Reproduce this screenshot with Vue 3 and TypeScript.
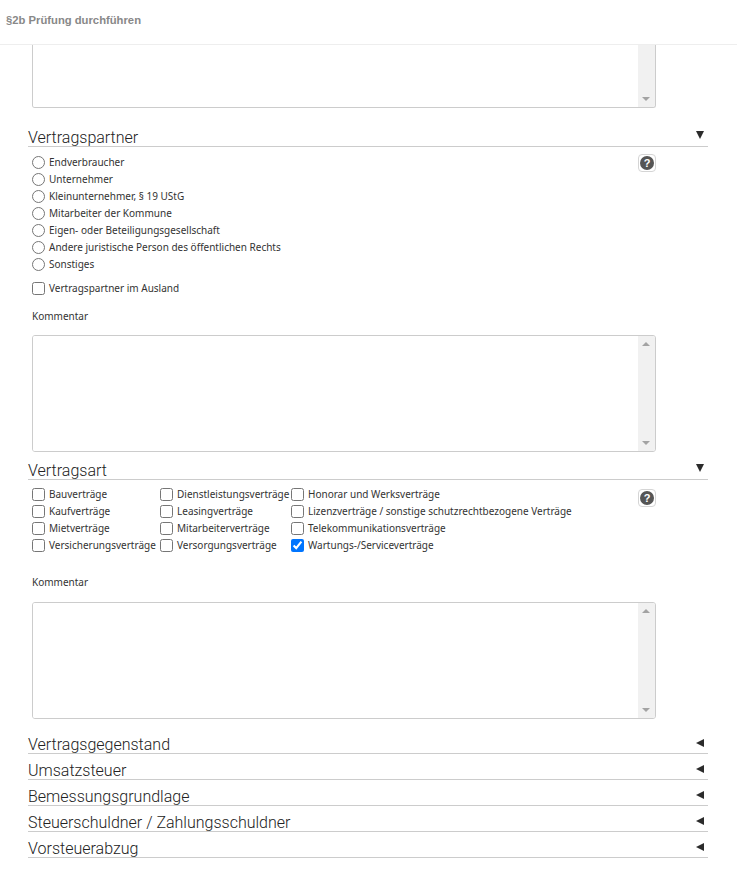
<script setup lang="ts">
const partners = [
  'Endverbraucher', 'Unternehmer', 'Kleinunternehmer, § 19 UStG', 'Mitarbeiter der Kommune',
  'Eigen- oder Beteiligungsgesellschaft', 'Andere juristische Person des öffentlichen Rechts', 'Sonstiges',
]
const kinds = [
  ['Bauverträge', 'Kaufverträge', 'Mietverträge', 'Versicherungsverträge'],
  ['Dienstleistungsverträge', 'Leasingverträge', 'Mitarbeiterverträge', 'Versorgungsverträge'],
  ['Honorar und Werksverträge', 'Lizenzverträge / sonstige schutzrechtbezogene Verträge', 'Telekommunikationsverträge', 'Wartungs-/Serviceverträge'],
]
const collapsed = ['Vertragsgegenstand', 'Umsatzsteuer', 'Bemessungsgrundlage', 'Steuerschuldner / Zahlungsschuldner', 'Vorsteuerabzug']
</script>

<template>
  <div class="page">
    <header class="top">§2b Prüfung durchführen</header>
    <main class="content">
      <div class="area area-clipped">
        <textarea></textarea>
        <div class="bar"><span class="up"></span><span class="down"></span></div>
      </div>

      <section class="sec first">
        <div class="head"><h2>Vertragspartner</h2><span class="tri-down"></span></div>
        <div class="options">
          <div class="radios">
            <label v-for="p in partners" :key="p" class="opt">
              <input type="radio" name="partner" /><span>{{ p }}</span>
            </label>
          </div>
          <button class="help" type="button"><span>?</span></button>
        </div>
        <label class="opt abroad"><input type="checkbox" /><span>Vertragspartner im Ausland</span></label>
        <div class="comment c1">Kommentar</div>
        <div class="area">
          <textarea></textarea>
          <div class="bar"><span class="up"></span><span class="down"></span></div>
        </div>
      </section>

      <section class="sec second">
        <div class="head"><h2>Vertragsart</h2><span class="tri-down"></span></div>
        <div class="options kinds">
          <div class="grid">
            <div v-for="(col, i) in kinds" :key="i" class="col">
              <label v-for="k in col" :key="k" class="opt">
                <input type="checkbox" :checked="k.startsWith('Wartungs')" /><span>{{ k }}</span>
              </label>
            </div>
          </div>
          <button class="help" type="button"><span>?</span></button>
        </div>
        <div class="comment c2">Kommentar</div>
        <div class="area">
          <textarea></textarea>
          <div class="bar"><span class="up"></span><span class="down"></span></div>
        </div>
      </section>

      <div class="closed">
        <div v-for="c in collapsed" :key="c" class="head shut"><h2>{{ c }}</h2><span class="tri-left"></span></div>
      </div>
    </main>
  </div>
</template>

<style>
html, body { margin: 0; background: #fff; }
</style>

<style scoped>
.page {
  width: 737px;
  height: 876px;
  overflow: hidden;
  font-family: "Noto Sans", sans-serif;
  font-size: 10px;
  color: #333;
  background: #fff;
}
.top {
  box-sizing: border-box;
  height: 45px;
  padding: 13px 0 0 6px;
  border-bottom: 1px solid #eee;
  font: bold 11.25px/14px "Liberation Sans", sans-serif;
  color: #888;
}
.content { padding: 0 29px 0 28px; }
.area {
  box-sizing: border-box;
  display: flex;
  width: 624px;
  height: 117px;
  margin-left: 4px;
  border: 1px solid #ccc;
  border-radius: 3px;
  overflow: hidden;
}
.area-clipped { height: 63px; border-top: 0; border-radius: 0 0 3px 3px; }
.area textarea {
  flex: 1;
  min-width: 0;
  border: 0;
  outline: 0;
  padding: 0;
  resize: none;
  background: #fff;
}
.bar {
  position: relative;
  width: 17px;
  flex: none;
  background: #f1f1f1;
}
.up, .down {
  position: absolute;
  left: 4px;
  width: 0;
  height: 0;
  border-left: 4px solid transparent;
  border-right: 4px solid transparent;
}
.up { top: 6px; border-bottom: 4px solid #a3a3a3; }
.down { bottom: 6px; border-top: 4px solid #a3a3a3; }
.area-clipped .up { display: none; }
.sec.first { margin-top: 18px; }
.sec.second { margin-top: 7px; }
.head {
  box-sizing: border-box;
  display: flex;
  justify-content: space-between;
  height: 21px;
  border-bottom: 1px solid #ccc;
}
.head h2 {
  margin: 0;
  font: 300 16px/23px Roboto, sans-serif;
  color: #222;
}
.tri-down {
  width: 0;
  height: 0;
  margin: 5px 4px 0 0;
  border-left: 4.5px solid transparent;
  border-right: 4.5px solid transparent;
  border-top: 8px solid #2b2b2b;
}
.tri-left {
  width: 0;
  height: 0;
  margin: 6px 4px 0 0;
  border-top: 4.5px solid transparent;
  border-bottom: 4.5px solid transparent;
  border-right: 8px solid #2b2b2b;
}
.options {
  display: flex;
  justify-content: space-between;
  width: 628px;
  margin-top: 7px;
}
.radios { display: flex; flex-direction: column; }
.opt {
  display: flex;
  align-items: center;
  height: 17px;
  line-height: 17px;
  white-space: nowrap;
}
.opt input {
  flex: none;
  width: 13px;
  height: 13px;
  margin: 0 4px 0 4px;
  accent-color: #0075ff;
}
.abroad { margin-top: 7px; }
.comment { margin-left: 4px; line-height: 14px; }
.c1 { margin-top: 12px; margin-bottom: 12px; }
.c2 { margin-top: 21px; margin-bottom: 13px; }
.help {
  box-sizing: border-box;
  width: 18px;
  height: 18px;
  padding: 0;
  margin-top: 0;
  display: flex;
  align-items: center;
  justify-content: center;
  border: 1px solid #d5d5d5;
  border-radius: 4px;
  background: #fff;
}
.help span {
  width: 14px;
  height: 14px;
  border-radius: 50%;
  background: #555;
  color: #fff;
  font: bold 11px/14px "Liberation Sans", sans-serif;
  text-align: center;
}
.kinds { margin-top: 6px; }
.kinds .help { margin-top: 3px; }
.grid {
  display: grid;
  grid-template-columns: 128px 131px auto;
}
.col { display: flex; flex-direction: column; }
.closed { margin-top: 9px; }
.shut { height: 26px; padding-top: 5px; }
</style>
